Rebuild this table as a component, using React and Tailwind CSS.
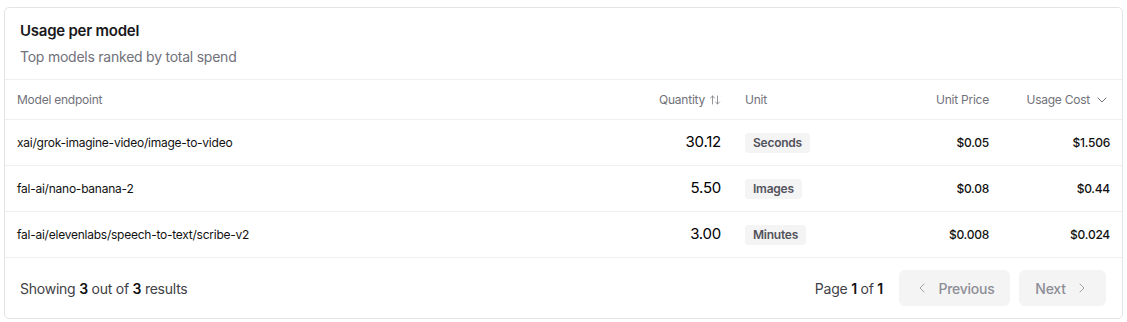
import { ArrowUpDown, ChevronDown, ChevronLeft, ChevronRight } from "lucide-react";

const rows = [
  { model: "xai/grok-imagine-video/image-to-video", qty: "30.12", unit: "Seconds", price: "$0.05", cost: "$1.506" },
  { model: "fal-ai/nano-banana-2", qty: "5.50", unit: "Images", price: "$0.08", cost: "$0.44" },
  { model: "fal-ai/elevenlabs/speech-to-text/scribe-v2", qty: "3.00", unit: "Minutes", price: "$0.008", cost: "$0.024" },
];

const cols = "grid grid-cols-[1fr_132px_128px_140px_121px]";

const App = () => {
  return (
    <div className="min-h-screen bg-white pt-[7px] pl-[4px] font-['Inter',sans-serif] tracking-[-0.015em]">
      <div className="w-[1119px] overflow-hidden rounded-[5px] border border-[#e4e4e7] bg-white">
        {/* Card header */}
        <div className="border-b border-[#efeff1] px-[15px] pt-[13px] pb-[12px]">
          <h2 className="text-[15px] leading-[20px] font-semibold text-[#18181b]">Usage per model</h2>
          <p className="mt-[6px] text-[14px] leading-[20px] text-[#71717a]">Top models ranked by total spend</p>
        </div>

        {/* Table head */}
        <div className={`${cols} h-[40px] items-center border-b border-[#efeff1] text-[12px] text-[#71717a]`}>
          <div className="px-[12px]">Model endpoint</div>
          <div className="flex items-center justify-end gap-[4px] px-[12px]">
            Quantity <ArrowUpDown className="h-[12px] w-[12px]" strokeWidth={1.5} />
          </div>
          <div className="px-[12px]">Unit</div>
          <div className="px-[12px] text-right">Unit Price</div>
          <div className="flex items-center justify-end gap-[4px] px-[12px]">
            Usage Cost <ChevronDown className="h-[16px] w-[16px]" strokeWidth={1.5} />
          </div>
        </div>

        {/* Rows */}
        {rows.map((r) => (
          <div key={r.model} className={`${cols} h-[46px] items-center border-b border-[#efeff1]`}>
            <div className="px-[12px] text-[12px] text-[#111111]">{r.model}</div>
            <div className="px-[12px] text-right text-[15px] text-black">{r.qty}</div>
            <div className="flex px-[12px]">
              <span className="flex h-[20px] items-center rounded-[4px] bg-[#f4f4f5] px-[8px] text-[12px] font-semibold text-[#52525b]">
                {r.unit}
              </span>
            </div>
            <div className="px-[12px] text-right text-[12px] font-medium text-[#111111]">{r.price}</div>
            <div className="px-[12px] text-right text-[12px] font-medium text-[#111111]">{r.cost}</div>
          </div>
        ))}

        {/* Footer */}
        <div className="flex h-[60px] items-center justify-between px-[15px]">
          <p className="text-[14px] text-[#3f3f46]">
            Showing <span className="font-semibold text-[#111111]">3</span> out of{" "}
            <span className="font-semibold text-[#111111]">3</span> results
          </p>
          <div className="flex items-center pr-[1px]">
            <p className="mr-[16px] text-[14px] text-[#3f3f46]">
              Page <span className="font-semibold text-[#111111]">1</span> of{" "}
              <span className="font-semibold text-[#111111]">1</span>
            </p>
            <button className="flex h-[36px] w-[111px] items-center justify-center gap-[8px] rounded-[6px] bg-[#f4f4f5] text-[14px] font-medium text-[#8e8e96]">
              <ChevronLeft className="h-[16px] w-[16px] text-[#a1a1aa]" strokeWidth={1.5} /> Previous
            </button>
            <button className="ml-[9px] flex h-[36px] w-[87px] items-center justify-center gap-[8px] rounded-[6px] bg-[#f4f4f5] text-[14px] font-medium text-[#8e8e96]">
              Next <ChevronRight className="h-[16px] w-[16px] text-[#a1a1aa]" strokeWidth={1.5} />
            </button>
          </div>
        </div>
      </div>
    </div>
  );
};
export default App;
